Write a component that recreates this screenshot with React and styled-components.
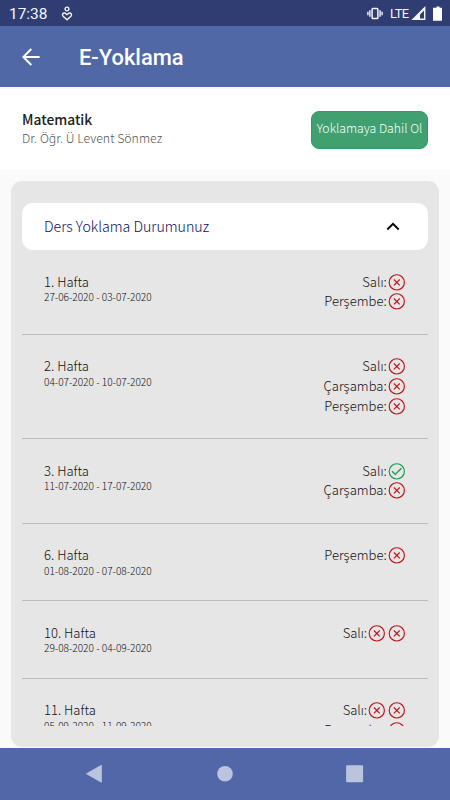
import React from 'react';
import styled, { createGlobalStyle } from 'styled-components';

const GlobalStyle = createGlobalStyle`
  *, *::before, *::after { box-sizing: border-box; }
  body {
    margin: 0;
    background: #fafafa;
    font-family: 'Noto Sans CJK JP', 'Noto Sans', sans-serif;
    -webkit-font-smoothing: antialiased;
  }
`;

const Screen = styled.div`
  width: 450px;
  height: 800px;
  display: flex;
  flex-direction: column;
  overflow: hidden;
  background: #fafafa;
`;

const StatusBar = styled.header`
  height: 26px;
  flex: none;
  display: flex;
  align-items: center;
  justify-content: space-between;
  padding: 1px 8px 0 9px;
  background: #2f3d73;
  color: #f4f6fb;
  font-family: Roboto, sans-serif;
`;

const StatusGroup = styled.div`
  display: flex;
  align-items: center;
`;

const Clock = styled.span`
  width: 51px;
  font-size: 15.4px;
  line-height: 24px;
`;

const Network = styled.span`
  width: 20px;
  margin: 0 1px 0 7px;
  font-size: 12.8px;
  line-height: 24px;
  letter-spacing: -0.5px;
`;

const AppBar = styled.div`
  height: 61px;
  flex: none;
  display: flex;
  align-items: center;
  gap: 38px;
  padding: 1px 22px 0;
  background: #5168a7;
  color: #fff;
`;

const BackButton = styled.button`
  display: flex;
  padding: 0;
  border: 0;
  background: none;
  color: inherit;
`;

const AppTitle = styled.h1`
  margin: 0;
  padding-top: 2px;
  font: 500 21.9px/28px Roboto, sans-serif;
`;

const CourseHeader = styled.section`
  height: 83px;
  flex: none;
  display: flex;
  align-items: center;
  justify-content: space-between;
  padding: 0 22px;
  background: #fff;
  border-top: 2px solid #f6f6f8;
`;

const CourseInfo = styled.div`
  padding-bottom: 1px;
`;

const CourseName = styled.div`
  font-size: 13.8px;
  font-weight: 500;
  line-height: 19px;
  color: #202020;
`;

const Lecturer = styled.div`
  font-size: 12.3px;
  font-weight: 300;
  line-height: 19px;
  color: #555;
`;

const JoinButton = styled.button`
  width: 117px;
  height: 38px;
  padding: 0 0 3px;
  border: 1px solid #24a064;
  border-radius: 8px;
  background: #40a070;
  color: #fff;
  font: 300 12.25px/20px 'Noto Sans CJK JP', 'Noto Sans', sans-serif;
  white-space: nowrap;
`;

const Panel = styled.main`
  flex: 1;
  min-height: 0;
  display: flex;
  flex-direction: column;
  margin: 11px 11px 1px;
  padding: 21.6px 11px 21px;
  border-radius: 11px;
  background: #e6e6e6;
`;

const PanelHeader = styled.div`
  height: 47.7px;
  flex: none;
  display: flex;
  align-items: center;
  justify-content: space-between;
  padding: 0 28px 0 22px;
  border-radius: 11px;
  background: #fff;
  color: #0c0c5c;
  font-size: 14.2px;
  font-weight: 300;
`;

const WeekList = styled.div`
  flex: 1;
  min-height: 0;
  overflow: hidden;
`;

const WeekRow = styled.div`
  display: flex;
  align-items: flex-start;
  justify-content: space-between;
  padding: 21.5px 21.7px 22.9px 22px;
  border-bottom: 1px solid #bdbdbd;
`;

const WeekName = styled.div`
  font-size: 13.05px;
  font-weight: 300;
  line-height: 19.6px;
  color: #111;
`;

const WeekDates = styled.div`
  font-size: 10.1px;
  font-weight: 300;
  line-height: 12.6px;
  color: #111;
`;

const Days = styled.div`
  display: flex;
  flex-direction: column;
  align-items: flex-end;
`;

const DayLine = styled.div`
  height: 19.6px;
  display: flex;
  align-items: center;
  font-size: 13.05px;
  font-weight: 300;
  line-height: 19.6px;
  color: #111;
`;

const MarkIcon = styled.svg`
  width: 19.6px;
  height: 19.6px;
  flex: none;
  fill: none;
  stroke: ${(p) => (p.$present ? '#169b52' : '#bd151c')};
`;

const NavBar = styled.nav`
  height: 52px;
  flex: none;
  display: flex;
  align-items: center;
  justify-content: space-between;
  padding: 0 86px 0 85px;
  background: #5167a7;
  color: #bbc4df;
`;

const weeks = [
  { name: '1. Hafta', dates: '27-06-2020 - 03-07-2020', days: [['Salı', [false]], ['Perşembe', [false]]] },
  { name: '2. Hafta', dates: '04-07-2020 - 10-07-2020', days: [['Salı', [false]], ['Çarşamba', [false]], ['Perşembe', [false]]] },
  { name: '3. Hafta', dates: '11-07-2020 - 17-07-2020', days: [['Salı', [true]], ['Çarşamba', [false]]] },
  { name: '6. Hafta', dates: '01-08-2020 - 07-08-2020', days: [['Perşembe', [false]]] },
  { name: '10. Hafta', dates: '29-08-2020 - 04-09-2020', days: [['Salı', [false, false]]] },
  { name: '11. Hafta', dates: '05-09-2020 - 11-09-2020', days: [['Salı', [false, false]], ['Perşembe', [false]]] },
];

function Mark({ present }) {
  return (
    <MarkIcon viewBox="0 0 19.6 19.6" $present={present}>
      <circle cx="9.8" cy="10.4" r="7.6" strokeWidth="1.15" />
      {present ? (
        <path d="M5 10.3l3.2 3.1 6.2-6.1" strokeWidth="1.4" />
      ) : (
        <path d="M6.9 7.5l5.8 5.8M12.7 7.5l-5.8 5.8" strokeWidth="1.15" />
      )}
    </MarkIcon>
  );
}

function Week({ week }) {
  return (
    <WeekRow>
      <div>
        <WeekName>{week.name}</WeekName>
        <WeekDates>{week.dates}</WeekDates>
      </div>
      <Days>
        {week.days.map(([day, marks]) => (
          <DayLine key={day}>
            <span>{day}:</span>
            {marks.map((present, i) => (
              <Mark key={i} present={present} />
            ))}
          </DayLine>
        ))}
      </Days>
    </WeekRow>
  );
}

export default function App() {
  return (
    <>
      <GlobalStyle />
      <Screen>
        <StatusBar>
          <StatusGroup>
            <Clock>17:38</Clock>
            <svg width="14" height="16" viewBox="0 0 14 16" fill="none" stroke="currentColor" strokeWidth="1.4">
              <circle cx="7" cy="3" r="1.9" />
              <path d="M7 13.7L3.1 10.2C1.5 8.5 3.2 6.4 5.2 7.2L7 8.7l1.8-1.5c2-.8 3.7 1.3 2.1 3z" />
            </svg>
          </StatusGroup>
          <StatusGroup>
            <svg width="16" height="14" viewBox="0 0 16 14" fill="none" stroke="currentColor">
              <rect x="5.1" y="1.5" width="5.8" height="10" rx=".8" strokeWidth="1.5" />
              <path d="M2.9 3.3v6.4M13.1 3.3v6.4M.9 4.8v3.4M15.1 4.8v3.4" strokeWidth="1.4" />
            </svg>
            <Network>LTE</Network>
            <svg width="15" height="15" viewBox="0 0 15 15" fill="currentColor">
              <path fillRule="evenodd" d="M14.4 0v14H.4zM13 4.4L9 8.4v4h4z" />
            </svg>
            <svg width="16" height="16" viewBox="0 0 16 16" fill="#fff">
              <path d="M9 1.7h1.5V.6h3v1.1H16v13H7v-13z" />
            </svg>
          </StatusGroup>
        </StatusBar>
        <AppBar>
          <BackButton aria-label="Geri">
            <svg width="19" height="18" viewBox="0 0 19 18" fill="none" stroke="currentColor" strokeWidth="1.9">
              <path d="M17.6 9H1.5M9.3 1L1.3 9l8 8" />
            </svg>
          </BackButton>
          <AppTitle>E-Yoklama</AppTitle>
        </AppBar>
        <CourseHeader>
          <CourseInfo>
            <CourseName>Matematik</CourseName>
            <Lecturer>Dr. Öğr. Ü Levent Sönmez</Lecturer>
          </CourseInfo>
          <JoinButton>Yoklamaya Dahil Ol</JoinButton>
        </CourseHeader>
        <Panel>
          <PanelHeader>
            <span>Ders Yoklama Durumunuz</span>
            <svg width="14" height="9" viewBox="0 0 14 9" fill="none" stroke="#000" strokeWidth="1.9">
              <path d="M1.3 7.5L7 1.8l5.7 5.7" />
            </svg>
          </PanelHeader>
          <WeekList>
            {weeks.map((week) => (
              <Week key={week.name} week={week} />
            ))}
          </WeekList>
        </Panel>
        <NavBar>
          <svg width="18" height="18" viewBox="0 0 18 18" fill="currentColor">
            <path d="M.8 8.7L16 0q.8-.3.8.5v16.5q0 .8-.8.5z" />
          </svg>
          <svg width="16" height="16" viewBox="0 0 16 16" fill="currentColor">
            <circle cx="8" cy="7.8" r="7.8" />
          </svg>
          <svg width="18" height="18" viewBox="0 0 18 18" fill="currentColor">
            <rect x=".1" y=".2" width="17" height="17" rx="1" />
          </svg>
        </NavBar>
      </Screen>
    </>
  );
}
